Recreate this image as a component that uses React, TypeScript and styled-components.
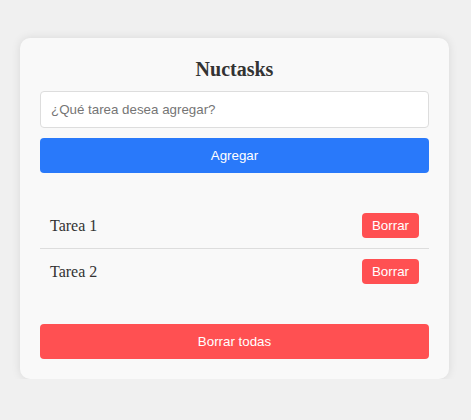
import React, { useState } from "react";
import styled, { createGlobalStyle } from "styled-components";

const Global = createGlobalStyle`
  html, body { margin: 0; padding: 0; }
  body { background: #f0f0f0; font-family: "Liberation Serif", "Times New Roman", serif; }
`;

const Page = styled.div`
  padding: 38px 22px 0 20px;
`;

const Card = styled.div`
  background: #f9f9f9;
  border-radius: 10px;
  box-shadow: 0 0 10px rgba(0, 0, 0, 0.1);
  padding: 20px;
  display: flex;
  flex-direction: column;
`;

const Title = styled.h1`
  margin: 0 0 10px;
  font-family: "Liberation Serif", "Times New Roman", serif;
  font-size: 20px;
  line-height: 23px;
  font-weight: bold;
  color: #333;
  text-align: center;
`;

const Input = styled.input`
  box-sizing: border-box;
  height: 37px;
  padding: 0 10px;
  border: 1px solid #ddd;
  border-radius: 4px;
  background: #fff;
  font-family: "Liberation Sans", Arial, sans-serif;
  font-size: 13.333px;
  color: #333;
  outline: none;
  &::placeholder { color: #757575; }
`;

const Button = styled.button<{ $variant: "primary" | "danger" }>`
  box-sizing: border-box;
  height: 35px;
  border: none;
  border-radius: 4px;
  background: ${(p) => (p.$variant === "primary" ? "#2979fa" : "#ff5052")};
  color: #fff;
  font-family: "Liberation Sans", Arial, sans-serif;
  font-size: 13.333px;
  cursor: pointer;
`;

const AddButton = styled(Button)`
  margin-top: 10px;
`;

const ClearButton = styled(Button)`
  margin-top: 30px;
`;

const List = styled.ul`
  list-style: none;
  margin: 30px 0 0;
  padding: 0;
`;

const Row = styled.li<{ $last?: boolean }>`
  display: flex;
  align-items: center;
  justify-content: space-between;
  padding: 10px;
  border-bottom: ${(p) => (p.$last ? "none" : "1px solid #ddd")};
`;

const TaskText = styled.span`
  font-family: "Liberation Serif", "Times New Roman", serif;
  font-size: 16px;
  color: #333;
`;

const SmallButton = styled.button`
  box-sizing: border-box;
  height: 25px;
  padding: 0 10px;
  border: none;
  border-radius: 4px;
  background: #ff5052;
  color: #fff;
  font-family: "Liberation Sans", Arial, sans-serif;
  font-size: 13.333px;
  cursor: pointer;
`;

export default function App() {
  const [tasks] = useState(["Tarea 1", "Tarea 2"]);
  return (
    <>
      <Global />
      <Page>
        <Card>
          <Title>Nuctasks</Title>
          <Input placeholder="¿Qué tarea desea agregar?" />
          <AddButton $variant="primary">Agregar</AddButton>
          <List>
            {tasks.map((t, i) => (
              <Row key={t} $last={i === tasks.length - 1}>
                <TaskText>{t}</TaskText>
                <SmallButton>Borrar</SmallButton>
              </Row>
            ))}
          </List>
          <ClearButton $variant="danger">Borrar todas</ClearButton>
        </Card>
      </Page>
    </>
  );
}
